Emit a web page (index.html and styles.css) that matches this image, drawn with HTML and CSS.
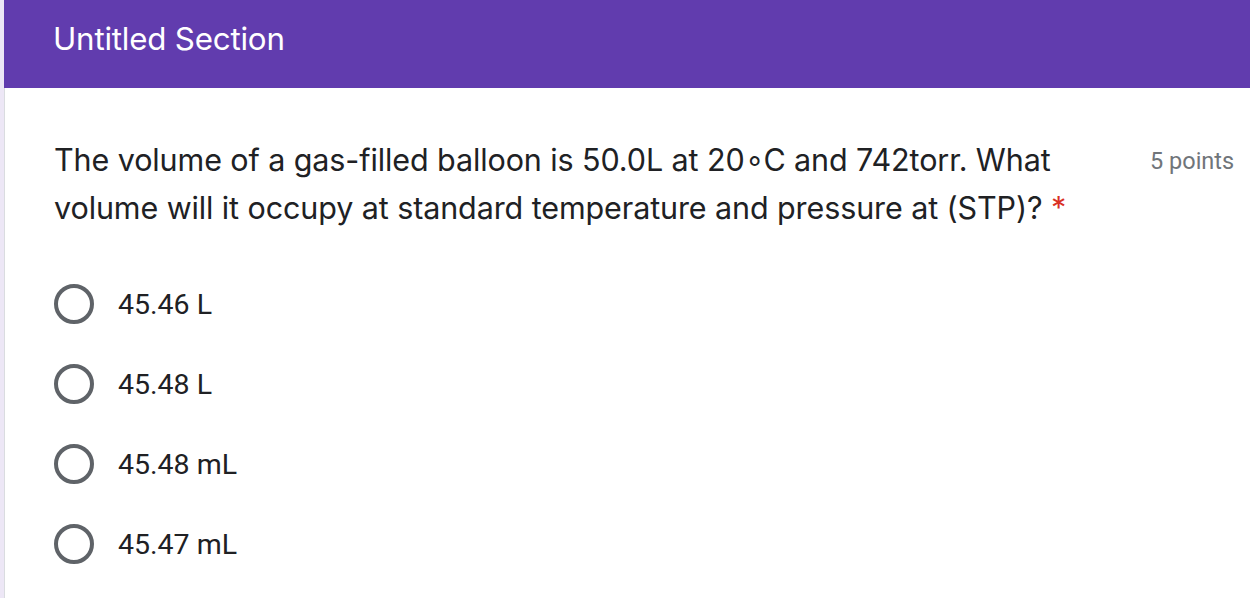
FILE: index.html
```html
<!DOCTYPE html>
<html>
<head>
<meta charset="utf-8">
<link rel="stylesheet" href="styles.css">
</head>
<body>
<div class="page">
  <div class="section-header">
    <div class="section-title">Untitled Section</div>
  </div>
  <div class="card">
    <div class="question">
      <div class="question-title">The volume of a gas-filled balloon is 50.0L at 20∘C and 742torr. What volume will it occupy at standard temperature and pressure at (STP)? <span class="req">*</span></div>
      <div class="points">5 points</div>
    </div>
    <div class="options">
      <div class="option"><span class="radio"></span><span class="label">45.46 L</span></div>
      <div class="option"><span class="radio"></span><span class="label">45.48 L</span></div>
      <div class="option"><span class="radio"></span><span class="label">45.48 mL</span></div>
      <div class="option"><span class="radio"></span><span class="label">45.47 mL</span></div>
    </div>
  </div>
</div>
</body>
</html>
```

FILE: styles.css
```css
html, body {
  margin: 0;
  padding: 0;
  background: #ede7f6;
  height: 598px;
  overflow: hidden;
}
.page {
  margin-left: 4px;
  display: flex;
  flex-direction: column;
  height: 598px;
}
.section-header {
  background: #613cae;
  height: 88px;
  display: flex;
  align-items: center;
  padding-left: 49px;
}
.section-title {
  font-family: "Inter", "Open Sans", sans-serif;
  font-size: 31.3px;
  color: #ffffff;
  letter-spacing: -0.2px;
  padding-bottom: 11px;
}
.card {
  flex: 1;
  background: #ffffff;
  border-left: 1px solid #dadce0;
  padding: 48px 0 0 49px;
}
.question {
  display: flex;
  align-items: flex-start;
}
.question-title {
  width: 1086px;
  flex: none;
  font-family: "Inter", "Open Sans", sans-serif;
  font-size: 30.5px;
  line-height: 48px;
  color: #202124;
  letter-spacing: -0.1px;
}
.req {
  color: #d93025;
}
.points {
  margin-left: 10px;
  font-family: "Roboto", sans-serif;
  font-size: 23.5px;
  color: #70757a;
  line-height: 48px;
  margin-top: 1px;
  white-space: nowrap;
}
.options {
  display: flex;
  flex-direction: column;
  margin-top: 52px;
  gap: 40px;
}
.option {
  display: flex;
  align-items: center;
  height: 40px;
}
.radio {
  box-sizing: border-box;
  width: 40px;
  height: 40px;
  border: 4px solid #5f6368;
  border-radius: 50%;
  flex: none;
}
.label {
  margin-left: 24px;
  font-family: "Roboto", sans-serif;
  font-size: 28.5px;
  color: #202124;
}
```
